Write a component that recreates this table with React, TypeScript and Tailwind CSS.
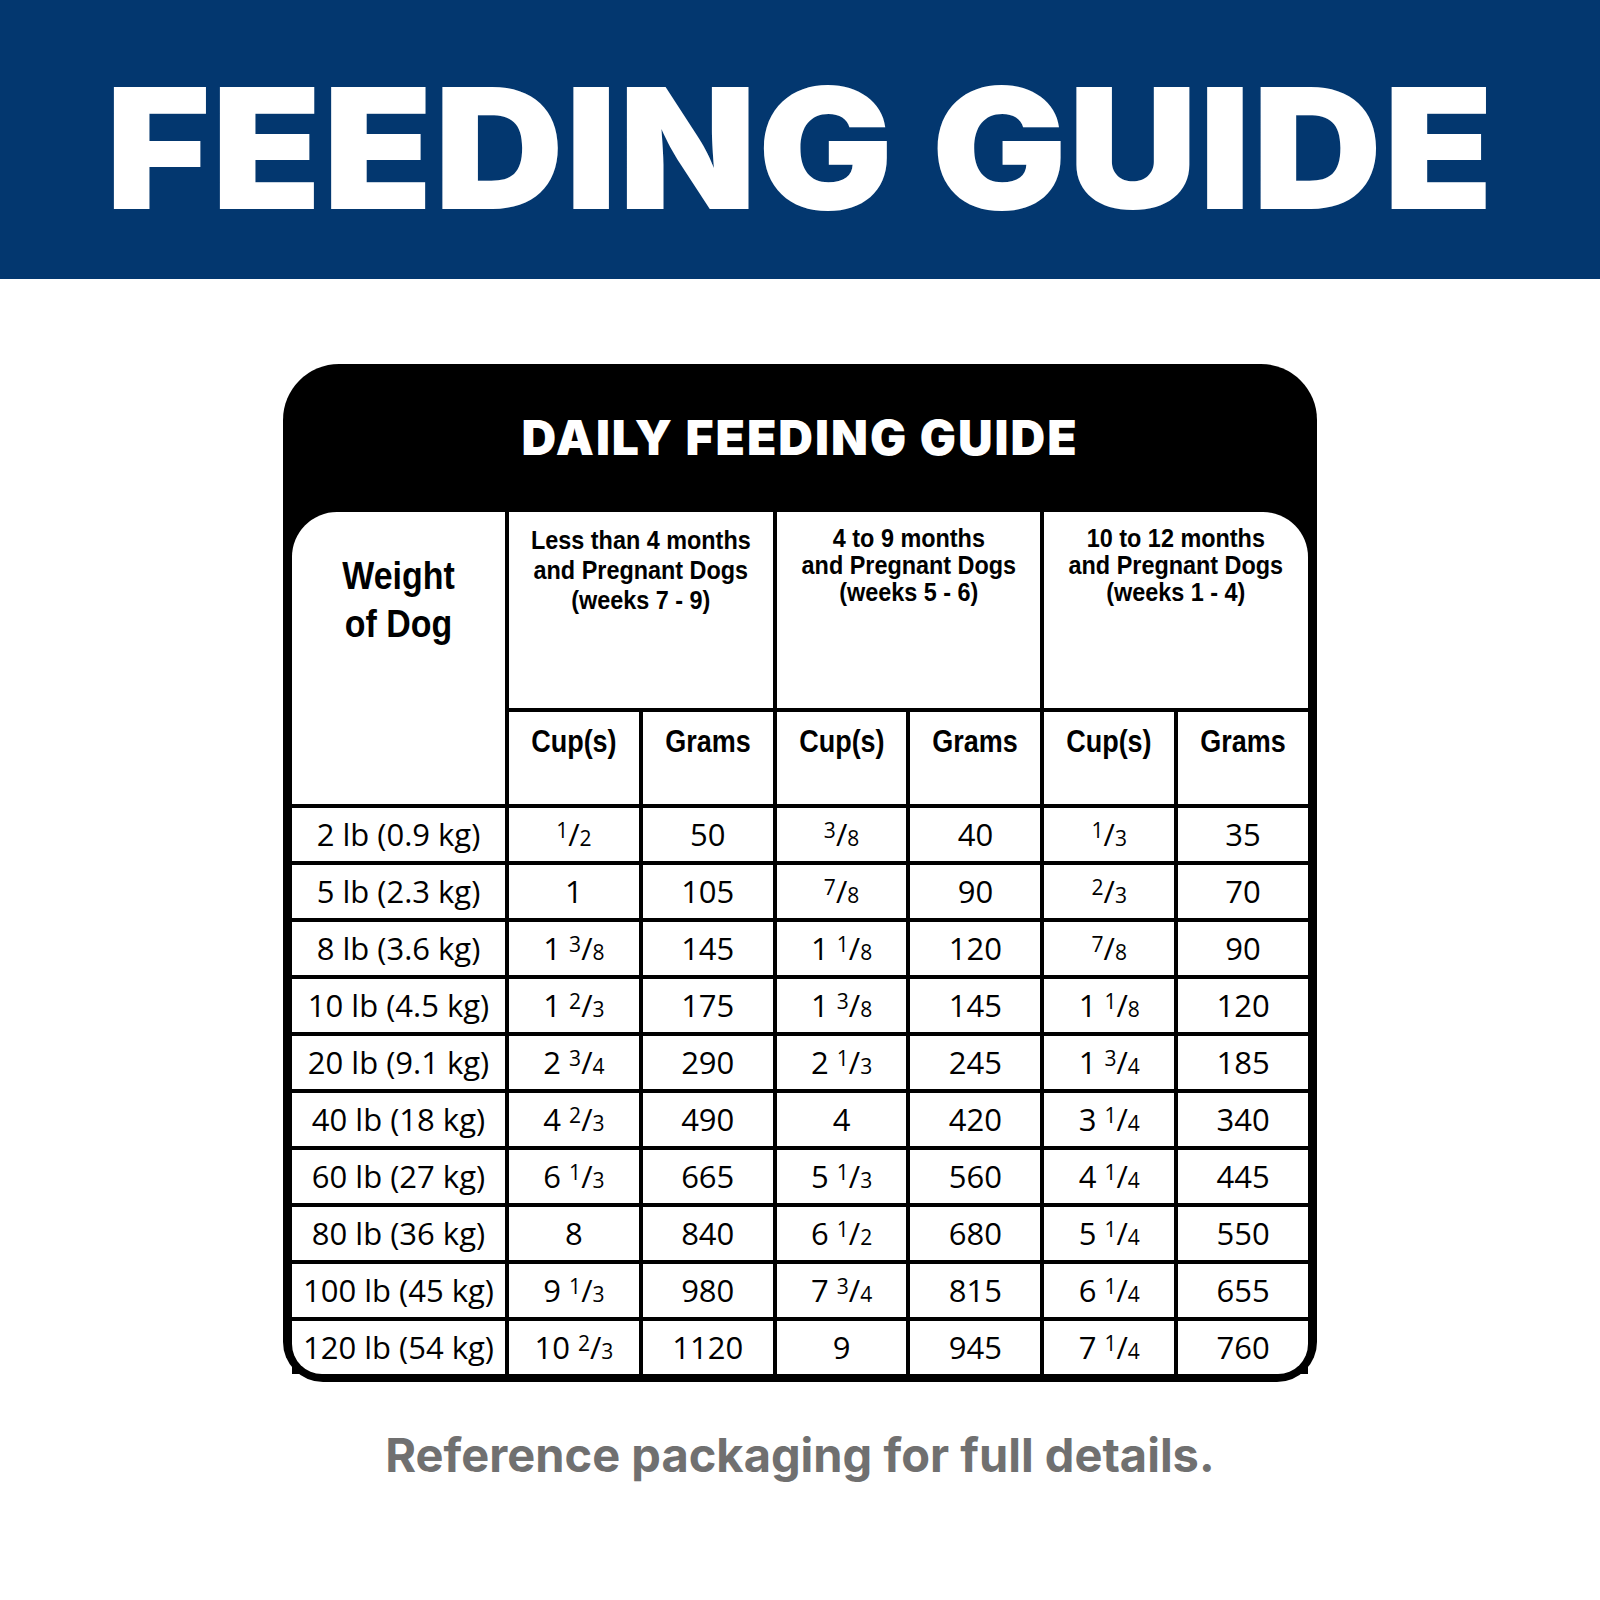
import * as React from 'react';

const rows: string[][] = [
  ['2 lb (0.9 kg)', '1/2', '50', '3/8', '40', '1/3', '35'],
  ['5 lb (2.3 kg)', '1', '105', '7/8', '90', '2/3', '70'],
  ['8 lb (3.6 kg)', '1 3/8', '145', '1 1/8', '120', '7/8', '90'],
  ['10 lb (4.5 kg)', '1 2/3', '175', '1 3/8', '145', '1 1/8', '120'],
  ['20 lb (9.1 kg)', '2 3/4', '290', '2 1/3', '245', '1 3/4', '185'],
  ['40 lb (18 kg)', '4 2/3', '490', '4', '420', '3 1/4', '340'],
  ['60 lb (27 kg)', '6 1/3', '665', '5 1/3', '560', '4 1/4', '445'],
  ['80 lb (36 kg)', '8', '840', '6 1/2', '680', '5 1/4', '550'],
  ['100 lb (45 kg)', '9 1/3', '980', '7 3/4', '815', '6 1/4', '655'],
  ['120 lb (54 kg)', '10 2/3', '1120', '9', '945', '7 1/4', '760'],
];

const ages = [
  { lines: ['Less than 4 months', 'and Pregnant Dogs', '(weeks 7 - 9)'], lh: 'leading-[30px] pt-[13px]' },
  { lines: ['4 to 9 months', 'and Pregnant Dogs', '(weeks 5 - 6)'], lh: 'leading-[27px] pt-[13px]' },
  { lines: ['10 to 12 months', 'and Pregnant Dogs', '(weeks 1 - 4)'], lh: 'leading-[27px] pt-[13px]' },
];

// no condensed face installed, so squeeze Arial-metric bold a bit
const narrow = "font-['Liberation_Sans',Arial,sans-serif] font-bold scale-x-[0.87] whitespace-nowrap";
const narrowHead = "font-['Liberation_Sans',Arial,sans-serif] font-bold scale-x-[0.9] whitespace-nowrap";

// "1 3/8" -> whole number plus a small raised fraction
const Amount: React.FC<{ value: string }> = ({ value }) => {
  const parts = value.split(' ');
  return (
    <span>
      {parts.map((p, i) => {
        const sep = i > 0 ? ' ' : '';
        if (!p.includes('/')) return <span key={i}>{sep}{p}</span>;
        const [num, den] = p.split('/');
        return (
          <span key={i}>
            {sep}
            <span className="text-[21px] align-[8px]">{num}</span>
            <span>/</span>
            <span className="text-[21px]">{den}</span>
          </span>
        );
      })}
    </span>
  );
};

const App: React.FC = () => {
  return (
    <div className="w-[1600px] min-h-[1600px] bg-white">
      <div className="h-[279px] bg-[#03376f] flex items-center justify-center pt-[16px]">
        <h1 className="font-['Inter',sans-serif] font-black text-white text-[168px] leading-none tracking-[1px] scale-x-[1.07] whitespace-nowrap">
          FEEDING GUIDE
        </h1>
      </div>

      <div className="flex justify-center pt-[85px]">
        <div className="w-[1034px] bg-black rounded-t-[56px] rounded-b-[40px] px-[9px] pb-[8px]">
          <div className="h-[148px] flex items-center justify-center">
            <h2 className="font-['Inter',sans-serif] font-black text-white text-[48px] leading-none tracking-[2px]">
              DAILY FEEDING GUIDE
            </h2>
          </div>

          <div className="grid grid-cols-[213px_repeat(6,1fr)] grid-rows-[196px_92px_repeat(10,53px)] gap-[4px] bg-black">
            <div className="row-span-2 bg-white rounded-tl-[45px] pt-[40px] text-center text-black">
              <div className={`${narrow} text-[39px] leading-[48px]`}>Weight</div>
              <div className={`${narrow} text-[39px] leading-[48px]`}>of Dog</div>
            </div>
            {ages.map((a, i) => (
              <div
                key={i}
                className={`col-span-2 bg-white text-center text-[26px] text-black ${a.lh} ${i === 2 ? 'rounded-tr-[45px]' : ''}`}
              >
                {a.lines.map((l) => (
                  <div key={l} className={narrowHead}>
                    {l}
                  </div>
                ))}
              </div>
            ))}
            {[0, 1, 2].map((i) => (
              <React.Fragment key={i}>
                <div className="bg-white pt-[12px] text-center text-[31px] leading-[36px]">
                  <div className={narrow}>Cup(s)</div>
                </div>
                <div className="bg-white pt-[12px] text-center text-[31px] leading-[36px]">
                  <div className={narrow}>Grams</div>
                </div>
              </React.Fragment>
            ))}
            {rows.map((r, ri) =>
              r.map((c, ci) => (
                <div
                  key={`${ri}-${ci}`}
                  className={`bg-white flex items-center justify-center font-['Open_Sans',sans-serif] text-[31px] text-black whitespace-nowrap ${
                    ri === rows.length - 1 && ci === 0 ? 'rounded-bl-[30px]' : ''
                  } ${ri === rows.length - 1 && ci === 6 ? 'rounded-br-[30px]' : ''}`}
                >
                  {ci === 0 ? c : <Amount value={c} />}
                </div>
              ))
            )}
          </div>
        </div>
      </div>

      <p className="mt-[49px] text-center font-['Inter',sans-serif] font-bold text-[47px] leading-none text-[#707070]">
        Reference packaging for full details.
      </p>
    </div>
  );
};

export default App;
